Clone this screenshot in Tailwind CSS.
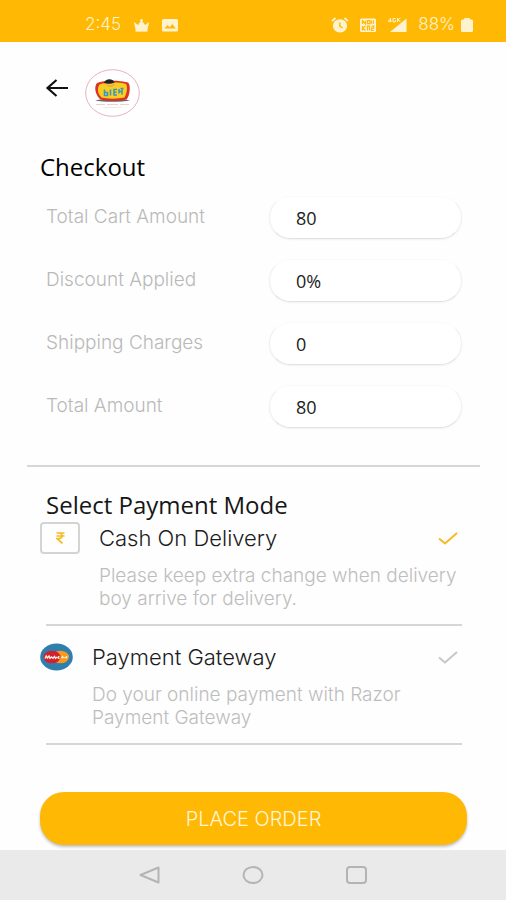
<!DOCTYPE html>
<html lang="en">
<head>
<meta charset="utf-8">
<meta name="viewport" content="width=device-width, initial-scale=1">
<title>Checkout</title>
<script src="https://cdn.jsdelivr.net/npm/@tailwindcss/browser@4"></script>
</head>
<body class="flex min-h-screen flex-col bg-[#fefefe] font-['Inter','Liberation_Sans',sans-serif] font-light text-[#1c1c1c]">

<div class="flex h-[42px] items-center justify-between bg-[#ffb904] pt-2 pr-[33px] pl-[85px] text-[17px] text-[#fff3cf]">
  <div class="flex items-center gap-3">
    <span>2:45</span>
    <svg class="h-4 w-[17px]" viewBox="0 0 17 16" fill="currentColor" aria-hidden="true"><path d="M2.500 12 .8 5l4.200 3 3.500-5 3.500 5 4.200-3L14.500 12Z"/><circle cx="8.500" cy="3.200" r="1.300"/><path d="M2.500 12h12v2.600h-12z"/></svg>
    <svg class="h-4 w-4" viewBox="0 0 16 16" aria-hidden="true"><rect y="2" width="16" height="12.500" rx="1.500" fill="currentColor"/><path d="m2.500 11.500 3-3.500 2.300 2.200 2.500-3.200 3.500 4.500Z" fill="#ffb904"/></svg>
  </div>
  <div class="flex items-center gap-[11px]">
    <svg class="h-4 w-[18px]" viewBox="0 0 18 16" aria-hidden="true"><ellipse cx="9" cy="8.800" rx="7.200" ry="6.600" fill="currentColor"/><path d="M1 4 4.500 1M17 4l-3.500-3" fill="none" stroke="currentColor" stroke-width="1.800"/><path d="M8.800 5.500v3.700l2.800 1.800" fill="none" stroke="#ffb904" stroke-width="1.400"/></svg>
    <svg class="h-4 w-4" viewBox="0 0 16 16" aria-hidden="true"><rect y="1.500" width="16" height="13.500" rx="1.500" fill="currentColor"/><g fill="none" stroke="#ffb904" stroke-width="1.200"><path d="M2.500 7V3.500L5.500 7V3.500M7.500 3.700h2.500v3H7.500ZM11.500 3.500v3.300M13.500 3.500v3.300M2.500 9v4.500M5.500 9l-3 2.200 3 2.300M7.500 13.500V9.200h2v4.300M11.500 9.200h2.200v2h-2.200v2.300h2.200"/></g></svg>
    <svg class="h-4 w-5" viewBox="0 0 20 16" fill="currentColor" aria-hidden="true"><path d="M19.500 1.500V15H3Z"/><path d="M3.500 1.500v3.200M1.300 4.300h3.400M4 1 1.300 4.300M6 1.500h2.500M6 4.800h2.500V3.200M6 1.500v3.300M10.500 1v4M13.500 1l-3 2 3 1.500" fill="none" stroke="currentColor"/></svg>
    <div class="flex items-center gap-[6px]">
      <span>88%</span>
      <svg class="h-4 w-3" viewBox="0 0 12 16" fill="currentColor" aria-hidden="true"><rect x="3" y="1" width="6" height="3" rx="1"/><rect y="2.500" width="12" height="12.500" rx="1.500"/></svg>
    </div>
  </div>
</div>

<header class="flex items-start gap-[16px] pt-[27px] pl-[45px]">
  <button type="button" aria-label="Back" class="mt-[9px]">
    <svg class="h-5 w-6" viewBox="0 0 24 20" fill="none" stroke="#111" stroke-width="2.200" aria-hidden="true"><path d="M23 10H2.500M11.500 2 2.500 10l9 8"/></svg>
  </button>
  <svg class="h-12 w-[55px]" viewBox="0 0 55 48" role="img" aria-label="Store logo">
    <ellipse cx="27.500" cy="24" rx="26.800" ry="23.300" fill="#fff" stroke="#e6b3ba"/>
    <path d="M10 31.500c9-2 26-2 35 0-8 1.700-27 1.700-35 0Z" fill="#666"/>
    <path d="M12 14c7-3 22-3 31-.5 3 2 2 13-1.500 17-7 1.700-20 1.700-26 0-5-4-7-12.500-3.500-16.500Z" fill="#dc3228"/>
    <path d="M14.500 15.500c7-2.500 19-2.500 26.500-.5 2 3 .5 10-1.500 13.500-7 1.500-17 1.500-23 0-4-3.500-4.500-9.500-2-13Z" fill="#f9cf1d"/>
    <path d="M19 14c1-4.500 9-5 10.500-.5-3 1.500-7.500 1.800-10.500.5Z" fill="#222"/>
    <path d="M22 15.500c2 2.500 5 2.500 7-.5" fill="none" stroke="#e6a46a" stroke-width="1.500"/>
    <path d="M19.500 20.500v6h3v-3h-3M25.500 20.500v6M32 20.500h-3v5.500h3m-3-2.800h2.500M34 20v4.500m0-2h3M38.500 19.500h-3m1.500 0v6" fill="none" stroke="#3f95c4" stroke-width="1.600"/>
    <path d="M11 35.500h9m2 0h11m2 0h9" stroke="#ecd0d0"/><path d="M18 38.500h19" stroke="#eee"/>
  </svg>
</header>

<main class="flex flex-col pr-[39px] pl-10">
  <h1 class="mt-[34px] font-['Open_Sans','Noto_Sans',sans-serif] text-[24px] leading-8 font-medium text-black">Checkout</h1>

  <form class="mt-[13px] flex flex-col">
    <div class="flex flex-col gap-5 pr-[5px] pl-[6px] text-[19px] text-[#b9b9b9]">
      <div class="flex items-center justify-between">
        <label for="cart">Total Cart Amount</label>
        <input id="cart" readonly value="80" class="h-[43px] w-[193px] rounded-full border border-t-[#fafafa] border-x-[#f0f0f0] border-b-[#e2e2e2] bg-white px-[26px] font-['Open_Sans','Noto_Sans',sans-serif] text-[18px] font-medium text-[#1c1c1c] shadow-xs">
      </div>
      <div class="flex items-center justify-between">
        <label for="discount">Discount Applied</label>
        <input id="discount" readonly value="0%" class="h-[43px] w-[193px] rounded-full border border-t-[#fafafa] border-x-[#f0f0f0] border-b-[#e2e2e2] bg-white px-[26px] font-['Open_Sans','Noto_Sans',sans-serif] text-[18px] font-medium text-[#1c1c1c] shadow-xs">
      </div>
      <div class="flex items-center justify-between">
        <label for="shipping">Shipping Charges</label>
        <input id="shipping" readonly value="0" class="h-[43px] w-[193px] rounded-full border border-t-[#fafafa] border-x-[#f0f0f0] border-b-[#e2e2e2] bg-white px-[26px] font-['Open_Sans','Noto_Sans',sans-serif] text-[18px] font-medium text-[#1c1c1c] shadow-xs">
      </div>
      <div class="flex items-center justify-between">
        <label for="total">Total Amount</label>
        <input id="total" readonly value="80" class="h-[43px] w-[193px] rounded-full border border-t-[#fafafa] border-x-[#f0f0f0] border-b-[#e2e2e2] bg-white px-[26px] font-['Open_Sans','Noto_Sans',sans-serif] text-[18px] font-medium text-[#1c1c1c] shadow-xs">
      </div>
    </div>

    <hr class="-mx-[13px] mt-[37px] border-t-2 border-[#d6d6d6]">

    <fieldset class="mt-[21px]">
      <legend class="pl-[6px] font-['Open_Sans','Noto_Sans',sans-serif] text-[24px] leading-[34px] font-medium text-[#161616]">Select Payment Mode</legend>

      <div class="flex items-start">
        <span class="flex h-8 w-10 items-center justify-center rounded-sm border-2 border-[#d4d4d4]">
          <svg class="h-3 w-[9px]" viewBox="0 0 9 12" fill="none" stroke="#f6bb22" stroke-width="1.700" aria-hidden="true"><path d="M.5 1h8M.5 4h8M1 1h2c4 0 4 5.500 0 5.500H1L6.500 11.500"/></svg>
        </span>
        <div class="ml-[19px] flex-1">
          <div class="flex h-8 items-center justify-between pr-[9px]">
            <label for="cash" class="text-[22px]">Cash On Delivery</label>
            <span class="grid items-center">
              <input id="cash" type="radio" name="mode" checked class="peer col-start-1 row-start-1 h-4 w-5 appearance-none">
              <svg class="pointer-events-none col-start-1 row-start-1 h-4 w-5 text-[#c6c6c6] peer-checked:text-[#f6bb22]" viewBox="0 0 20 16" fill="none" stroke="currentColor" stroke-width="2" aria-hidden="true"><path d="m1 8.500 6 5L19 3"/></svg>
            </span>
          </div>
          <p class="mt-[10px] text-[19px] leading-[23px] text-[#bdbdbd]">Please keep extra change when delivery boy arrive for delivery.</p>
        </div>
      </div>

      <hr class="mt-[14px] mr-[5px] ml-[6px] border-t-2 border-[#d6d6d6]">

      <div class="mt-[15px] flex items-start">
        <svg class="mt-[2px] h-7 w-[33px]" viewBox="0 0 33 28" role="img" aria-label="Card">
          <ellipse cx="16.500" cy="14" rx="16.300" ry="13.500" fill="#2f7eae"/>
          <ellipse cx="20.500" cy="14" rx="8.500" ry="6.300" fill="#f79b1e"/>
          <ellipse cx="12" cy="14" rx="8.500" ry="6.300" fill="#d3202c"/>
          <path d="m5 15.500 1.200-2.500 1.200 2 1.600-2 1 2.300 1.500-1.300 1.500 1.300 1.500-1.800 1 1.800 1.500-1.300M19.500 13.500c-2 0-2 2 0 2M21.500 15.200l1-1.500 1 1.500m1.500 0v-1.200M26.500 15.200v-2.200" fill="none" stroke="#ffeede" stroke-width="1.400"/>
        </svg>
        <div class="ml-[19px] flex-1">
          <div class="flex h-8 items-center justify-between pr-[9px]">
            <label for="gateway" class="text-[22px]">Payment Gateway</label>
            <span class="grid items-center">
              <input id="gateway" type="radio" name="mode" class="peer col-start-1 row-start-1 h-4 w-5 appearance-none">
              <svg class="pointer-events-none col-start-1 row-start-1 h-4 w-5 text-[#c6c6c6] peer-checked:text-[#f6bb22]" viewBox="0 0 20 16" fill="none" stroke="currentColor" stroke-width="2" aria-hidden="true"><path d="m1 8.500 6 5L19 3"/></svg>
            </span>
          </div>
          <p class="mt-[10px] pr-10 text-[19px] leading-[23px] text-[#bdbdbd]">Do your online payment with Razor Payment Gateway</p>
        </div>
      </div>

      <hr class="mt-[14px] mr-[5px] ml-[6px] border-t-2 border-[#d6d6d6]">
    </fieldset>

    <button type="submit" class="mt-[47px] h-[53px] rounded-[24px] bg-[#ffb904] text-[20px] text-[#fff6d8] shadow-[0_2px_3px_rgba(0,0,0,0.25)]">PLACE ORDER</button>
  </form>
</main>

<nav class="mt-auto flex h-[50px] items-center justify-center gap-[82px] bg-[#eaeaea] text-[#b4b4b4]" aria-label="System">
  <button type="button" aria-label="Back"><svg class="h-5 w-[21px]" viewBox="0 0 21 20" fill="none" stroke="currentColor" stroke-width="2" stroke-linejoin="round"><path d="M19.500 2.500v15L1.500 10Z"/></svg></button>
  <button type="button" aria-label="Home"><svg class="h-5 w-[22px]" viewBox="0 0 22 20" fill="none" stroke="currentColor" stroke-width="2"><ellipse cx="11" cy="10" rx="9.500" ry="8"/></svg></button>
  <button type="button" aria-label="Recents"><svg class="h-5 w-[21px]" viewBox="0 0 21 20" fill="none" stroke="currentColor" stroke-width="2"><rect x="1" y="2" width="19" height="16" rx="3"/></svg></button>
</nav>
</body>
</html>
